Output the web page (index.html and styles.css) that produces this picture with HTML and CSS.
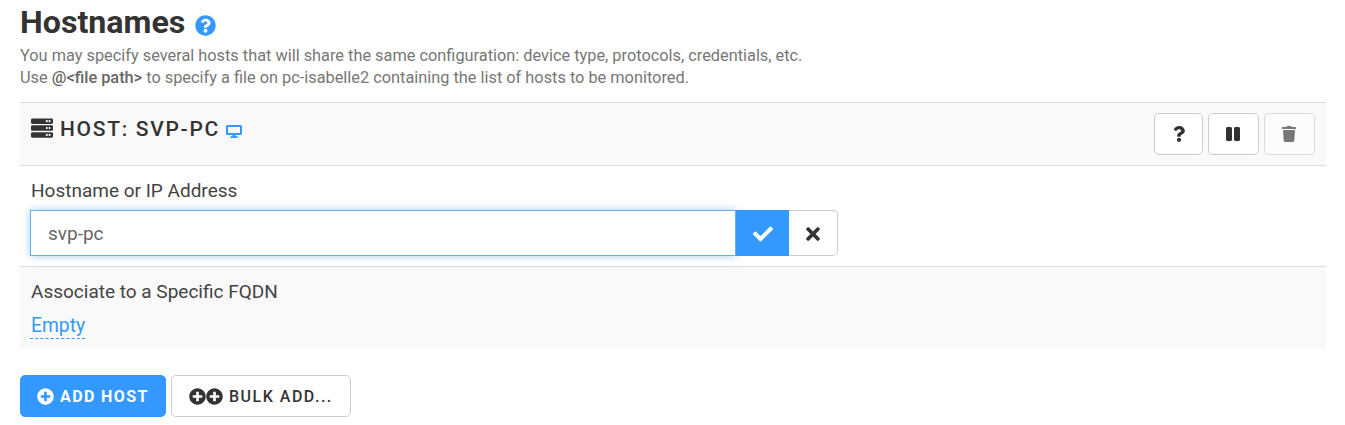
FILE: index.html
```html
<!DOCTYPE html>
<html lang="en">
<head>
<meta charset="UTF-8">
<meta name="viewport" content="width=device-width, initial-scale=1.0">
<title>Hostnames</title>
<link rel="stylesheet" href="styles.css">
</head>
<body>

<svg class="sprites" xmlns="http://www.w3.org/2000/svg">
    <symbol id="i-question-circle" viewBox="0 0 512 512"><path d="M504 256c0 136.997-111.043 248-248 248S8 392.997 8 256C8 119.083 119.043 8 256 8s248 111.083 248 248zM262.655 90c-54.497 0-89.255 22.957-116.549 63.758-3.536 5.286-2.353 12.415 2.715 16.258l34.699 26.31c5.205 3.947 12.621 3.008 16.665-2.122 17.864-22.658 30.113-35.797 57.303-35.797 20.429 0 45.698 13.148 45.698 32.958 0 14.976-12.363 22.667-32.534 33.976C247.128 238.528 216 254.941 216 296v4c0 6.627 5.373 12 12 12h56c6.627 0 12-5.373 12-12v-1.333c0-28.462 83.186-29.647 83.186-106.667 0-58.002-60.165-102-116.531-102zM256 338c-25.365 0-46 20.635-46 46 0 25.364 20.635 46 46 46s46-20.636 46-46c0-25.365-20.635-46-46-46z"/></symbol>
    <symbol id="i-server" viewBox="0 0 512 512"><path d="M480 160H32c-17.673 0-32-14.327-32-32V64c0-17.673 14.327-32 32-32h448c17.673 0 32 14.327 32 32v64c0 17.673-14.327 32-32 32zm-48-88c-13.255 0-24 10.745-24 24s10.745 24 24 24 24-10.745 24-24-10.745-24-24-24zm-64 0c-13.255 0-24 10.745-24 24s10.745 24 24 24 24-10.745 24-24-10.745-24-24-24zm112 248H32c-17.673 0-32-14.327-32-32v-64c0-17.673 14.327-32 32-32h448c17.673 0 32 14.327 32 32v64c0 17.673-14.327 32-32 32zm-48-88c-13.255 0-24 10.745-24 24s10.745 24 24 24 24-10.745 24-24-10.745-24-24-24zm-64 0c-13.255 0-24 10.745-24 24s10.745 24 24 24 24-10.745 24-24-10.745-24-24-24zm112 248H32c-17.673 0-32-14.327-32-32v-64c0-17.673 14.327-32 32-32h448c17.673 0 32 14.327 32 32v64c0 17.673-14.327 32-32 32zm-48-88c-13.255 0-24 10.745-24 24s10.745 24 24 24 24-10.745 24-24-10.745-24-24-24zm-64 0c-13.255 0-24 10.745-24 24s10.745 24 24 24 24-10.745 24-24-10.745-24-24-24z"/></symbol>
    <symbol id="i-question" viewBox="0 0 384 512"><path d="M202.021 0C122.202 0 70.503 32.703 29.914 91.026c-7.363 10.58-5.093 25.086 5.178 32.874l43.138 32.709c10.373 7.865 25.132 6.026 33.253-4.148 25.049-31.381 43.63-49.449 82.757-49.449 30.764 0 68.816 19.799 68.816 49.631 0 22.552-18.617 34.134-48.993 51.164-35.423 19.86-82.299 44.576-82.299 106.405V320c0 13.255 10.745 24 24 24h72.471c13.255 0 24-10.745 24-24v-5.773c0-42.86 125.268-44.645 125.268-160.627C377.504 66.256 286.902 0 202.021 0zM192 373.459c-38.196 0-69.271 31.075-69.271 69.271 0 38.195 31.075 69.27 69.271 69.27s69.271-31.075 69.271-69.271-31.075-69.27-69.271-69.27z"/></symbol>
    <symbol id="i-pause" viewBox="0 0 448 512"><path d="M144 479H48c-26.5 0-48-21.5-48-48V79c0-26.5 21.5-48 48-48h96c26.5 0 48 21.5 48 48v352c0 26.5-21.5 48-48 48zm304-48V79c0-26.5-21.5-48-48-48h-96c-26.5 0-48 21.5-48 48v352c0 26.5 21.5 48 48 48h96c26.5 0 48-21.5 48-48z"/></symbol>
    <symbol id="i-trash" viewBox="0 0 448 512"><path d="M432 32H312l-9.4-18.7A24 24 0 0 0 281.1 0H166.8a23.72 23.72 0 0 0-21.4 13.3L136 32H16A16 16 0 0 0 0 48v32a16 16 0 0 0 16 16h416a16 16 0 0 0 16-16V48a16 16 0 0 0-16-16zM53.2 467a48 48 0 0 0 47.9 45h245.8a48 48 0 0 0 47.9-45L416 128H32z"/></symbol>
    <symbol id="i-check" viewBox="0 0 512 512"><path d="M173.898 439.404l-166.4-166.4c-9.997-9.997-9.997-26.206 0-36.204l36.203-36.204c9.997-9.998 26.207-9.998 36.204 0L192 312.69 432.095 72.596c9.997-9.997 26.207-9.997 36.204 0l36.203 36.204c9.997 9.997 9.997 26.206 0 36.204l-294.4 294.401c-9.998 9.997-26.207 9.997-36.204-.001z"/></symbol>
    <symbol id="i-times" viewBox="0 0 352 512"><path d="M242.72 256l100.07-100.07c12.28-12.28 12.28-32.19 0-44.48l-22.24-22.24c-12.28-12.28-32.19-12.28-44.48 0L176 189.28 75.93 89.21c-12.28-12.28-32.19-12.28-44.48 0L9.21 111.45c-12.28 12.28-12.28 32.19 0 44.48L109.28 256 9.21 356.07c-12.28 12.28-12.28 32.19 0 44.48l22.24 22.24c12.28 12.28 32.2 12.28 44.48 0L176 322.72l100.07 100.07c12.28 12.28 32.2 12.28 44.48 0l22.24-22.24c12.28-12.28 12.28-32.19 0-44.48L242.72 256z"/></symbol>
    <symbol id="i-plus-circle" viewBox="0 0 512 512"><path d="M256 8C119 8 8 119 8 256s111 248 248 248 248-111 248-248S393 8 256 8zm144 276c0 6.6-5.4 12-12 12h-92v92c0 6.6-5.4 12-12 12h-56c-6.6 0-12-5.4-12-12v-92h-92c-6.6 0-12-5.4-12-12v-56c0-6.6 5.4-12 12-12h92v-92c0-6.6 5.4-12 12-12h56c6.6 0 12 5.4 12 12v92h92c6.6 0 12 5.4 12 12v56z"/></symbol>
</svg>

<div class="container">
    <h2 class="title">
        Hostnames
        <svg class="title-help"><use href="#i-question-circle"/></svg>
    </h2>
    <p class="intro">You may specify several hosts that will share the same configuration: device type, protocols, credentials, etc.<br>
    Use <b>@&lt;file path&gt;</b> to specify a file on pc-isabelle2 containing the list of hosts to be monitored.</p>

    <div class="host-header">
        <div class="host-name">
            <svg class="server-icon"><use href="#i-server"/></svg>
            <span>HOST: SVP-PC</span>
            <svg class="desktop-icon" viewBox="0 0 16 13">
                <path d="M1.5 0h13c.8 0 1.5.7 1.5 1.5v7c0 .8-.7 1.5-1.5 1.5h-13C.7 10 0 9.3 0 8.500v-7C0 .7.7 0 1.500 0zm.5 2v6h12V2zM6.500 10h3v1.300h2.200V13H4.300v-1.700h2.200z" fill-rule="evenodd"/>
            </svg>
        </div>
        <div class="host-actions">
            <button class="btn-icon btn-help"><svg class="icon-question"><use href="#i-question"/></svg></button>
            <button class="btn-icon btn-pause"><svg class="icon-pause"><use href="#i-pause"/></svg></button>
            <button class="btn-icon btn-trash"><svg class="icon-trash"><use href="#i-trash"/></svg></button>
        </div>
    </div>

    <div class="row">
        <label class="row-label" for="hostname">Hostname or IP Address</label>
        <div class="edit-group">
            <input id="hostname" class="edit-input" type="text" value="svp-pc">
            <button class="edit-ok"><svg class="icon-check"><use href="#i-check"/></svg></button>
            <button class="edit-cancel"><svg class="icon-times"><use href="#i-times"/></svg></button>
        </div>
    </div>

    <div class="row row-alt">
        <div class="row-label">Associate to a Specific FQDN</div>
        <a class="editable" href="#">Empty</a>
    </div>

    <div class="footer-buttons">
        <button class="btn btn-primary"><svg class="icon-plus"><use href="#i-plus-circle"/></svg>ADD HOST</button>
        <button class="btn btn-default"><svg class="icon-plus"><use href="#i-plus-circle"/></svg><svg class="icon-plus icon-plus-last"><use href="#i-plus-circle"/></svg>BULK ADD...</button>
    </div>
</div>

</body>
</html>
```

FILE: styles.css
```css
body {
    font-family: Roboto, Arial, sans-serif;
    background-color: #fff;
    color: #333;
    margin: 0;
    padding: 0;
}
svg {
    fill: currentColor;
}
.sprites {
    display: none;
}
.container {
    padding: 0 19px 0 20px;
}
.title {
    display: flex;
    align-items: center;
    height: 45px;
    margin: 0;
    font-size: 32.2px;
    font-weight: 700;
    line-height: 45px;
}
.title-help {
    width: 21px;
    height: 21px;
    margin-left: 9.5px;
    margin-top: 5px;
    color: #3399ff;
}
.intro {
    margin: 0 0 13px;
    font-size: 16.33px;
    line-height: 22px;
    color: #777;
}
.intro b {
    font-weight: 500;
    color: #666;
}
.host-header {
    display: flex;
    justify-content: space-between;
    height: 62px;
    padding: 0 11px;
    background-color: #f9f9f9;
    border-top: 1px solid #ddd;
    border-bottom: 1px solid #ddd;
}
.host-name {
    display: flex;
    align-items: center;
    height: 52px;
    font-size: 21px;
    font-weight: 500;
    letter-spacing: 1.7px;
}
.server-icon {
    width: 22px;
    height: 22px;
    margin-right: 7px;
    margin-top: -3px;
}
.desktop-icon {
    width: 16px;
    height: 13px;
    margin-left: 6px;
    margin-top: 4px;
    color: #3399ff;
}
.host-actions {
    display: flex;
    gap: 5px;
    padding-top: 10px;
}
.btn-icon {
    display: flex;
    align-items: center;
    justify-content: center;
    height: 42px;
    padding: 0;
    background-color: #fff;
    border: 1px solid #ccc;
    border-radius: 5px;
    color: #333;
}
.btn-help {
    width: 49px;
}
.btn-pause, .btn-trash {
    width: 51px;
    padding-right: 1px;
}
.btn-trash {
    opacity: .65;
}
.icon-question {
    width: 12px;
    height: 16px;
}
.icon-pause {
    width: 14px;
    height: 16px;
}
.icon-trash {
    width: 14px;
    height: 16px;
}
.row {
    padding: 14px 11px 10px 11px;
    height: 76px;
    border-bottom: 1px solid #ddd;
}
.row-alt {
    height: 57px;
    background-color: #f9f9f9;
    border-bottom: none;
}
.row-label {
    display: block;
    font-size: 19px;
    line-height: 22px;
    color: #444;
}
.edit-group {
    display: flex;
    width: 808px;
    height: 46px;
    margin-top: 8px;
    margin-left: -1px;
}
.edit-input {
    flex: 1;
    min-width: 0;
    box-sizing: border-box;
    height: 46px;
    padding: 0 17px;
    font-family: inherit;
    font-size: 19px;
    color: #666;
    background-color: #fff;
    border: 1px solid #66afe9;
    outline: none;
    box-shadow: 0 0 8px rgba(102, 175, 233, .6);
}
.edit-ok {
    width: 53px;
    padding: 2px 0 0;
    color: #fff;
    background-color: #3399ff;
    border: none;
}
.edit-cancel {
    width: 49px;
    padding: 2px 0 0;
    color: #333;
    background-color: #fff;
    border: 1px solid #ccc;
    border-left: none;
    border-radius: 0 5px 5px 0;
}
.icon-check {
    display: block;
    width: 20px;
    height: 20px;
    margin: auto;
}
.icon-times {
    display: block;
    width: 14px;
    height: 20px;
    margin: auto;
}
.editable {
    display: inline-block;
    margin: 11px 0 0 -1px;
    padding-left: 1px;
    font-size: 19.3px;
    line-height: 24px;
    color: #3399ff;
    text-decoration: none;
    border-bottom: 1px dashed #3399ff;
}
.footer-buttons {
    display: flex;
    gap: 5px;
    padding-top: 27px;
}
.btn {
    display: flex;
    align-items: center;
    height: 42px;
    box-sizing: border-box;
    font-family: inherit;
    font-size: 16px;
    font-weight: 500;
    letter-spacing: 1.5px;
    border-radius: 5px;
}
.btn-primary {
    width: 146px;
    padding: 0 0 0 16px;
    font-weight: 700;
    letter-spacing: 1.4px;
    color: #fff;
    background-color: #3399ff;
    border: 1px solid #3399ff;
}
.btn-default {
    width: 180px;
    padding: 0 0 0 17px;
    color: #333;
    background-color: #fff;
    border: 1px solid #ccc;
}
.icon-plus {
    width: 17px;
    height: 17px;
    margin-right: 6px;
}
.btn-default .icon-plus {
    margin-right: 0;
}
.btn-default .icon-plus-last {
    margin-right: 6px;
}
```
